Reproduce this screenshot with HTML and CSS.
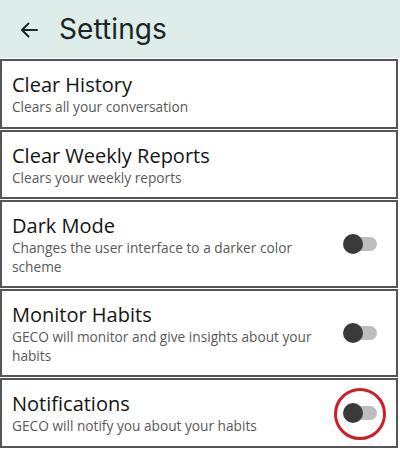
FILE: index.html
```html
<!DOCTYPE html>
<html lang="en">
<head>
<meta charset="utf-8">
<title>Settings</title>
<link rel="stylesheet" href="styles.css">
</head>
<body>
<header class="topbar">
  <svg class="back" width="18" height="16" viewBox="0 0 18 16" aria-hidden="true">
    <path d="M17 8H2M8.5 1.5L2 8l6.5 6.5" fill="none" stroke="#1c2624" stroke-width="2" stroke-linecap="round" stroke-linejoin="round"/>
  </svg>
  <h1 class="title">Settings</h1>
</header>
<main class="list">
  <section class="card">
    <div class="text">
      <div class="name">Clear History</div>
      <div class="desc">Clears all your conversation</div>
    </div>
  </section>
  <section class="card">
    <div class="text">
      <div class="name">Clear Weekly Reports</div>
      <div class="desc">Clears your weekly reports</div>
    </div>
  </section>
  <section class="card">
    <div class="text">
      <div class="name">Dark Mode</div>
      <div class="desc">Changes the user interface to a darker color scheme</div>
    </div>
    <span class="toggle"><span class="track"></span><span class="knob"></span></span>
  </section>
  <section class="card">
    <div class="text">
      <div class="name">Monitor Habits</div>
      <div class="desc">GECO will monitor and give insights about your habits</div>
    </div>
    <span class="toggle"><span class="track"></span><span class="knob"></span></span>
  </section>
  <section class="card">
    <div class="text">
      <div class="name">Notifications</div>
      <div class="desc">GECO will notify you about your habits</div>
    </div>
    <span class="toggle"><span class="track"></span><span class="knob"></span><span class="ring"></span></span>
  </section>
</main>
</body>
</html>
```
FILE: styles.css
```css
* { box-sizing: border-box; }
html, body { margin: 0; padding: 0; background: #ffffff; }
body { width: 400px; font-family: "Open Sans", "Noto Sans", sans-serif; }

.topbar {
  height: 58px;
  background: #deecea;
  display: flex;
  align-items: center;
  padding-left: 20px;
}
.back { display: block; margin-right: 21px; margin-top: 1px; }
.title {
  margin: 0;
  font-family: "Inter", "Lato", sans-serif;
  font-weight: 400;
  font-size: 28px;
  letter-spacing: 0.1px;
  color: #1a2624;
}

.list {
  display: flex;
  flex-direction: column;
  gap: 1px;
  padding-top: 1px;
  margin-right: 2px;
}
.card {
  border: 2px solid #555555;
  display: flex;
  align-items: center;
  padding: 10px 12px 10px 10px;
}
.text { flex: 1; min-width: 0; padding-right: 8px; }
.name {
  font-size: 20px;
  line-height: 27px;
  color: #141414;
}
.desc {
  font-size: 13.7px;
  line-height: 18.5px;
  color: #595959;
}

.toggle {
  position: relative;
  width: 34px;
  height: 20px;
  flex: none;
  margin-right: 7px;
}
.track {
  position: absolute;
  left: 8px;
  top: 3px;
  width: 26px;
  height: 14px;
  border-radius: 7px;
  background: #bdbdbd;
}
.knob {
  position: absolute;
  left: 0;
  top: 0;
  width: 20px;
  height: 20px;
  border-radius: 50%;
  background: #3a3a3a;
}
.ring {
  position: absolute;
  left: -9px;
  top: -15px;
  width: 52px;
  height: 52px;
  border-radius: 50%;
  border: 3px solid #cc1f2b;
}
```
